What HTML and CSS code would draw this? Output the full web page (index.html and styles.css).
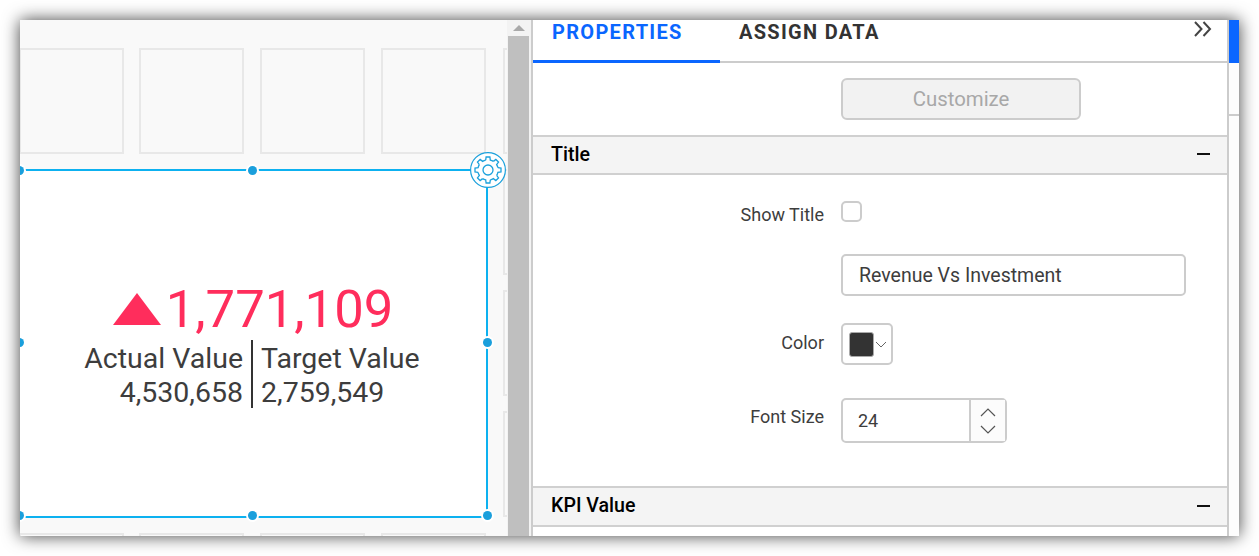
FILE: index.html
```html
<!DOCTYPE html>
<html lang="en">
<head>
  <meta charset="UTF-8" />
  <title>KPI Card Properties</title>
  <link rel="stylesheet" href="styles.css">
</head>
<body>

  <div class="window">

    <!-- design canvas -->
    <div class="canvas">
      <div class="tile t1"></div>
      <div class="tile t2"></div>
      <div class="tile t3"></div>
      <div class="tile t4"></div>
      <div class="tile t5"></div>
      <div class="tile t6"></div>
      <div class="tile t7"></div>
      <div class="tile t8"></div>
      <div class="tile t9"></div>
      <div class="tile t10"></div>
      <div class="tile t11"></div>
      <div class="tile t12"></div>

      <div class="widget">
        <div class="kpi-main">
          <span class="kpi-arrow"></span>
          <span class="kpi-value">1,771,109</span>
        </div>
        <div class="kpi-compare">
          <div class="kpi-col left">
            <div>Actual Value</div>
            <div>4,530,658</div>
          </div>
          <div class="kpi-col right">
            <div>Target Value</div>
            <div>2,759,549</div>
          </div>
        </div>
      </div>

      <span class="handle h-tl"></span>
      <span class="handle h-tc"></span>
      <span class="handle h-ml"></span>
      <span class="handle h-mr"></span>
      <span class="handle h-bl"></span>
      <span class="handle h-bc"></span>
      <span class="handle h-br"></span>

      <div class="gear-btn">
        <svg width="36" height="36" viewBox="-18 -18 36 36" fill="none" stroke="#1ba1dc" stroke-width="1.3">
          <circle r="17.4" fill="#fff" stroke-width="1.2"/>
          <circle r="5"/>
          <defs>
            <path id="cog" d="M-2.3 -9.9L-1.9 -13L1.9 -13L2.3 -9.9A10.2 10.2 0 0 1 5.4 -8.65"/>
          </defs>
          <use href="#cog"/>
          <use href="#cog" transform="rotate(45)"/>
          <use href="#cog" transform="rotate(90)"/>
          <use href="#cog" transform="rotate(135)"/>
          <use href="#cog" transform="rotate(180)"/>
          <use href="#cog" transform="rotate(225)"/>
          <use href="#cog" transform="rotate(270)"/>
          <use href="#cog" transform="rotate(315)"/>
        </svg>
      </div>
    </div>

    <div class="canvas-scroll">
      <div class="scroll-up"><span class="up-arrow"></span></div>
      <div class="scroll-thumb"></div>
    </div>

    <!-- properties panel -->
    <div class="panel">
      <div class="tabs">
        <div class="tab active">PROPERTIES</div>
        <div class="tab">ASSIGN DATA</div>
        <svg class="tabs-more" width="20" height="16" viewBox="0 0 20 16" fill="none" stroke="#444" stroke-width="2">
          <path d="M2 1L8.5 8L2 15"/>
          <path d="M10.5 1L17 8L10.5 15"/>
        </svg>
      </div>

      <div class="customize-row">
        <button class="customize-btn" disabled>Customize</button>
      </div>

      <div class="section-head">
        <span>Title</span>
        <span class="minus"></span>
      </div>

      <div class="form">
        <div class="row row-show">
          <label>Show Title</label>
          <span class="check"></span>
        </div>
        <div class="row row-text">
          <label></label>
          <div class="text-input">Revenue Vs Investment</div>
        </div>
        <div class="row row-color">
          <label>Color</label>
          <div class="color-pick">
            <span class="swatch"></span>
            <svg width="12" height="7" viewBox="0 0 12 7" fill="none" stroke="#666" stroke-width="1">
              <path d="M1 1L6 6L11 1"/>
            </svg>
          </div>
        </div>
        <div class="row row-size">
          <label>Font Size</label>
          <div class="spinner">
            <div class="spin-value">24</div>
            <div class="spin-btns">
              <svg width="16" height="9" viewBox="0 0 16 9" fill="none" stroke="#555" stroke-width="1.2">
                <path d="M1 8L8 1L15 8"/>
              </svg>
              <svg width="16" height="9" viewBox="0 0 16 9" fill="none" stroke="#555" stroke-width="1.2">
                <path d="M1 1L8 8L15 1"/>
              </svg>
            </div>
          </div>
        </div>
      </div>

      <div class="section-head kpi-head">
        <span>KPI Value</span>
        <span class="minus"></span>
      </div>
    </div>

    <div class="panel-scroll">
      <div class="panel-thumb"></div>
      <div class="panel-line"></div>
    </div>

  </div>

</body>
</html>
```

FILE: styles.css
```css
html, body {
  height: 100%;
}

body {
  margin: 0;
  padding: 20px;
  box-sizing: border-box;
  background: #fff;
  font-family: 'Roboto', sans-serif;
  color: #3d3d3d;
  overflow: hidden;
}

.window {
  display: flex;
  height: 516px;
  background: #fff;
  box-shadow: 0 0 16px rgba(0, 0, 0, 0.75);
  overflow: hidden;
}

/* canvas */
.canvas {
  position: relative;
  width: 487px;
  flex-shrink: 0;
  background: #f9f9f9;
  overflow: hidden;
}

.tile {
  position: absolute;
  width: 105px;
  height: 106px;
  box-sizing: border-box;
  border: 2px solid #e8e8e8;
}

.t1 { left: -1px; top: 28px; }
.t2 { left: 119px; top: 28px; }
.t3 { left: 240px; top: 28px; }
.t4 { left: 361px; top: 28px; }
.t5 { left: 483px; top: 28px; }
.t6 { left: 483px; top: 149px; }
.t7 { left: 483px; top: 270px; }
.t8 { left: 483px; top: 391px; }
.t9 { left: -1px; top: 513px; }
.t10 { left: 119px; top: 513px; }
.t11 { left: 240px; top: 513px; }
.t12 { left: 361px; top: 513px; }

.widget {
  position: absolute;
  left: -2px;
  top: 149px;
  width: 470px;
  height: 349px;
  box-sizing: border-box;
  border: 2px solid #0db1f0;
  background: #fff;
  display: flex;
  flex-direction: column;
  align-items: center;
  justify-content: center;
}

.kpi-main {
  display: flex;
  align-items: center;
  gap: 5px;
  height: 62px;
}

.kpi-arrow {
  width: 0;
  height: 0;
  border-left: 24.5px solid transparent;
  border-right: 24.5px solid transparent;
  border-bottom: 32px solid #ff2d5c;
}

.kpi-value {
  font-size: 52.6px;
  line-height: 62px;
  color: #ff2d5c;
}

.kpi-compare {
  display: flex;
  font-size: 28.5px;
  line-height: 34px;
  height: 68px;
  margin-bottom: 1px;
}

.kpi-col {
  width: 232px;
  box-sizing: border-box;
  padding: 2px 8px 0;
}

.kpi-col.left {
  text-align: right;
  border-right: 2px solid #333;
}

.kpi-col.right {
  text-align: left;
}

.handle {
  position: absolute;
  width: 9px;
  height: 9px;
  border-radius: 50%;
  background: #1a9fdc;
  box-shadow: 0 0 0 2px #fff;
}

.h-tl { left: -5px; top: 146px; }
.h-tc { left: 228px; top: 146px; }
.h-ml { left: -5px; top: 318px; }
.h-mr { left: 463px; top: 318px; }
.h-bl { left: -5px; top: 491px; }
.h-bc { left: 228px; top: 491px; }
.h-br { left: 463px; top: 491px; }

.gear-btn {
  position: absolute;
  left: 450px;
  top: 132px;
  width: 36px;
  height: 36px;
}

/* scrollbars */
.canvas-scroll {
  width: 24px;
  flex-shrink: 0;
  background: #f3f3f3;
  border-right: 2px solid #ccc;
}

.scroll-up {
  height: 16px;
  display: flex;
  justify-content: center;
  align-items: center;
}

.up-arrow {
  width: 0;
  height: 0;
  border-left: 6px solid transparent;
  border-right: 6px solid transparent;
  border-bottom: 6px solid #a9a9a9;
}

.scroll-thumb {
  height: 500px;
  width: 21px;
  margin-left: 1px;
  background: #bfbfbf;
}

.panel {
  width: 694px;
  flex-shrink: 0;
  background: #fff;
}

.tabs {
  position: relative;
  display: flex;
  height: 43px;
  box-sizing: border-box;
  border-bottom: 2px solid #ccc;
}

.tab {
  font-size: 20px;
  font-weight: 700;
  letter-spacing: 1.3px;
  line-height: 24px;
  color: #333;
  height: 43px;
  box-sizing: border-box;
  padding: 0 19px;
}

.tab.active {
  color: #0a66ff;
  border-bottom: 3px solid #0a66ff;
  width: 187px;
}

.tabs-more {
  position: absolute;
  right: 14px;
  top: 1px;
}

.customize-row {
  height: 72px;
  padding: 15px 0 0 308px;
  box-sizing: border-box;
}

.customize-btn {
  width: 240px;
  height: 42px;
  font-family: inherit;
  font-size: 20.4px;
  color: #a8a8a8;
  background: #f2f2f2;
  border: 2px solid #ccc;
  border-radius: 6px;
}

.section-head {
  display: flex;
  justify-content: space-between;
  align-items: center;
  height: 40px;
  box-sizing: border-box;
  padding: 0 17px 2px 18px;
  background: #f4f4f4;
  border-top: 2px solid #d0d0d0;
  border-bottom: 2px solid #d0d0d0;
  font-size: 19.6px;
  font-weight: 500;
  color: #000;
}

.kpi-head {
  height: 41px;
}

.minus {
  width: 13px;
  height: 2px;
  background: #111;
}

.form {
  height: 311px;
  box-sizing: border-box;
}

.row {
  display: flex;
  align-items: center;
}

.row label {
  width: 291px;
  text-align: right;
  font-size: 18px;
  margin-right: 17px;
  flex-shrink: 0;
}

.row-show { padding-top: 23px; }
.row-text { padding-top: 29px; }
.row-color { padding-top: 27px; }
.row-size { padding-top: 33px; }

.row-show label { margin-top: 6px; }
.row-color label { margin-bottom: 4px; }
.row-size label { margin-bottom: 8px; }

.check {
  width: 21px;
  height: 21px;
  box-sizing: border-box;
  border: 2px solid #ccc;
  border-radius: 5px;
  background: #fff;
}

.text-input {
  width: 345px;
  height: 42px;
  box-sizing: border-box;
  border: 2px solid #ccc;
  border-radius: 5px;
  padding: 0 16px;
  font-size: 19.5px;
  line-height: 39px;
}

.color-pick {
  width: 52px;
  height: 42px;
  box-sizing: border-box;
  border: 2px solid #ccc;
  border-radius: 5px;
  display: flex;
  align-items: center;
  padding-left: 6px;
  gap: 1px;
}

.swatch {
  width: 25px;
  height: 25px;
  box-sizing: border-box;
  border: 1px solid #aaa;
  border-radius: 3px;
  background: #333;
}

.spinner {
  display: flex;
  width: 166px;
  height: 45px;
  box-sizing: border-box;
  border: 2px solid #ccc;
  border-radius: 5px;
}

.spin-value {
  flex: 1;
  font-size: 18px;
  line-height: 41px;
  padding-left: 15px;
}

.spin-btns {
  width: 34px;
  display: flex;
  flex-direction: column;
  align-items: center;
  justify-content: center;
  gap: 8px;
  background: #fcfcfc;
  border-left: 2px solid #ccc;
}

.panel-scroll {
  flex: 1;
  background: #fdfdfd;
  border-left: 2px solid #ccc;
}

.panel-thumb {
  height: 43px;
  background: #0a66ff;
}

.panel-line {
  height: 2px;
  margin-top: 51px;
  background: #ccc;
}
```
